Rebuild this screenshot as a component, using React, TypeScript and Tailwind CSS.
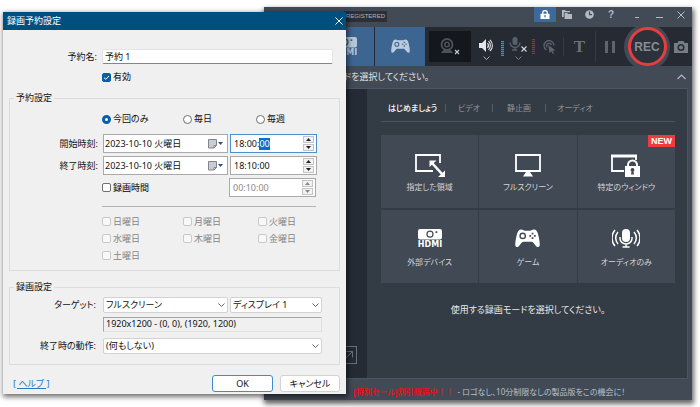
import { useEffect, useRef, useState } from "react";
import type { ReactNode } from "react";

const days = [
  ["日曜日", "月曜日", "火曜日"],
  ["水曜日", "木曜日", "金曜日"],
  ["土曜日"],
];

function HdmiIcon() {
  return (
    <svg width="26" height="19" viewBox="0 0 26 19" fill="currentColor" aria-hidden="true">
      <path
        fillRule="evenodd"
        d="M3 0h20a2 2 0 0 1 2 2v6.500a2 2 0 0 1-2 2H3a2 2 0 0 1-2-2V2a2 2 0 0 1 2-2Zm10 1.600a3.600 3.600 0 1 0 0 7.200 3.600 3.600 0 0 0 0-7.200Zm0 1.200a2.400 2.400 0 1 1 0 4.800 2.400 2.400 0 0 1 0-4.800Zm5.500-.6v1.800h1.800V2.200Z"
      />
      <circle cx="13" cy="5.200" r="1" />
      <text x="13" y="18" fontSize="8" fontWeight="700" textAnchor="middle" fontFamily="DejaVu Sans, sans-serif">
        HDMI
      </text>
    </svg>
  );
}

function GamepadIcon({ size }: { size: number }) {
  return (
    <svg width={size} height={size * 0.75} viewBox="0 0 24 18" fill="currentColor" aria-hidden="true">
      <path
        fillRule="evenodd"
        d="M6 0.500C7.600 0.500 8.200 1.600 9.500 1.600H14.500C15.800 1.600 16.400 0.500 18 0.500C20.500 0.500 21.600 2.400 22.400 6C23.200 9.600 24 13.500 23.700 15.700C23.400 17.600 21.600 17.900 20.300 16.500C18.700 14.800 17.600 12.200 15.900 12.200H8.100C6.400 12.200 5.300 14.800 3.700 16.500C2.400 17.900 0.600 17.600 0.300 15.700C0 13.500 0.800 9.600 1.600 6C2.400 2.400 3.500 0.500 6 0.500ZM7.400 3.400a3.200 3.200 0 1 0 0 6.400 3.200 3.200 0 0 0 0-6.400Zm0 1.300a1.900 1.900 0 1 1 0 3.800 1.900 1.900 0 0 1 0-3.800ZM16 3.500v1.700h1.700V3.500ZM16 8v1.700h1.700V8ZM13.800 5.700v1.700h1.700V5.700ZM18.200 5.700v1.700h1.700V5.700Z"
      />
    </svg>
  );
}

function RegionIcon() {
  return (
    <svg width="30" height="23" viewBox="0 0 30 23" fill="none" stroke="currentColor" aria-hidden="true">
      <path d="M25 9V1H1v16h17" strokeWidth="1.800" />
      <path d="M17 9l10 11" stroke="#414955" strokeWidth="5" />
      <path d="M17 9l10 11" strokeWidth="2.600" />
      <path d="M14.500 6.500h7l-7 6.500ZM30 23h-7l7-6.500Z" fill="currentColor" stroke="none" />
    </svg>
  );
}

function ScreenIcon() {
  return (
    <svg width="26" height="23" viewBox="0 0 26 23" fill="none" stroke="currentColor" aria-hidden="true">
      <path d="M1 1h24v16H1Z" strokeWidth="1.800" />
      <path d="M11 18h4l3 4.500H8Z" fill="currentColor" stroke="none" />
    </svg>
  );
}

function WindowLockIcon() {
  return (
    <svg width="30" height="23" viewBox="0 0 30 23" fill="none" stroke="currentColor" aria-hidden="true">
      <path d="M13 17H1V2h24v4" strokeWidth="1.800" />
      <path d="M0 2h26" strokeWidth="3" />
      <path d="M17 13v-2a4.500 4.500 0 0 1 9 0v2" strokeWidth="2" />
      <path
        fillRule="evenodd"
        d="M14 12h15v11H14Zm7.500 2a1.900 1.900 0 0 0-1 3.500L20 20.500h3l-.5-3a1.900 1.900 0 0 0-1-3.500Z"
        fill="currentColor"
        stroke="none"
      />
    </svg>
  );
}

function AudioIcon() {
  return (
    <svg width="28" height="19" viewBox="0 0 28 19" fill="none" stroke="currentColor" strokeWidth="1.500" aria-hidden="true">
      <rect x="10" y="0" width="8" height="13" rx="4" fill="currentColor" stroke="none" />
      <path d="M8 8v1.500a6 5.500 0 0 0 12 0V8M14 15v3M10.500 18h7" />
      <path d="M6 3a9 9 0 0 0 0 12M3 1a12 12 0 0 0 0 16M22 3a9 9 0 0 1 0 12M25 1a12 12 0 0 1 0 16" />
    </svg>
  );
}

function Meter({ className }: { className: string }) {
  return (
    <svg width="3" height="15" viewBox="0 0 3 15" className={className} aria-hidden="true">
      <path d="M1.500 0v15" stroke="currentColor" strokeWidth="3" strokeDasharray="1.200 0.800" />
    </svg>
  );
}

function Chevron({ className }: { className: string }) {
  return (
    <svg width="7" height="4" viewBox="0 0 7 4" fill="none" stroke="currentColor" className={className} aria-hidden="true">
      <path d="M.5.5l3 3 3-3" />
    </svg>
  );
}

const modes: { label: string; icon: ReactNode; isNew?: boolean }[] = [
  { label: "指定した領域", icon: <RegionIcon /> },
  { label: "フルスクリーン", icon: <ScreenIcon /> },
  { label: "特定のウィンドウ", icon: <WindowLockIcon />, isNew: true },
  { label: "外部デバイス", icon: <HdmiIcon /> },
  { label: "ゲーム", icon: <GamepadIcon size={25} /> },
  { label: "オーディオのみ", icon: <AudioIcon /> },
];

function TitleButton({ label, active, children }: { label: string; active?: boolean; children: ReactNode }) {
  return (
    <button
      type="button"
      aria-label={label}
      className={`flex h-[15px] w-[22px] items-center justify-center ${active ? "bg-[#3d6a9a] text-white" : "text-[#b5b9c0]"}`}
    >
      {children}
    </button>
  );
}

function Recorder() {
  return (
    <section
      aria-label="レコーダー"
      className="absolute top-[7px] right-2 left-[264px] flex flex-col bg-[#424a56] shadow-[1px_3px_5px_1px_rgba(0,0,0,0.6)]"
    >
      <header className="flex h-5 items-start">
        <span className="mt-1 ml-20 bg-[#2a2f38] px-0.5 font-['Liberation_Sans',sans-serif] text-[6px] leading-[11px] text-[#b0b5bc]">
          REGISTERED
        </span>
        <div className="ml-auto flex">
          <TitleButton label="ロック" active>
            <svg width="10" height="9" viewBox="0 0 10 9" fill="none" aria-hidden="true">
              <path d="M2.700 4V2.800a2.300 2.300 0 0 1 4.600 0V4" stroke="currentColor" strokeWidth="1.300" />
              <path fillRule="evenodd" d="M.5 3.700h9V9h-9ZM4.400 5v2.600h1.200V5Z" fill="currentColor" />
            </svg>
          </TitleButton>
          <TitleButton label="フォルダー">
            <svg width="10" height="9" viewBox="0 0 10 9" fill="currentColor" aria-hidden="true">
              <path d="M0 0h3l1 1h4v1.200H1.800V7H0ZM2.600 3h2.600l1 1H10v5H2.600Z" />
            </svg>
          </TitleButton>
          <TitleButton label="履歴">
            <svg width="9" height="9" viewBox="0 0 9 9" aria-hidden="true">
              <circle cx="4.500" cy="4.500" r="4.300" fill="currentColor" />
              <path d="M4.500 1.500v3.200H7" fill="none" stroke="#424a56" strokeWidth="1.200" />
            </svg>
          </TitleButton>
          <TitleButton label="ヘルプ">
            <span className="font-['Liberation_Sans',sans-serif] text-[10px] leading-none font-bold">?</span>
          </TitleButton>
          <span className="w-1" />
          <TitleButton label="トレイへ">
            <span className="mt-1.5 h-px w-1 bg-current" />
          </TitleButton>
          <TitleButton label="最小化">
            <span className="mt-1.5 h-px w-[7px] bg-current" />
          </TitleButton>
          <TitleButton label="閉じる">
            <svg width="8" height="8" viewBox="0 0 8 8" stroke="currentColor" aria-hidden="true">
              <path d="M.5.5l7 7M7.500.5l-7 7" />
            </svg>
          </TitleButton>
        </div>
      </header>

      <div className="flex h-[39px] bg-[#252a33]">
        <button type="button" aria-label="外部デバイス" className="flex w-[110px] items-center justify-end bg-[#3d6591] pr-4 text-[#b6c7da]">
          <HdmiIcon />
        </button>
        <button type="button" aria-label="ゲーム" className="ml-px flex w-[50px] items-center justify-center bg-[#3d6591] text-[#bccbdc]">
          <GamepadIcon size={19} />
        </button>
        <button type="button" aria-label="ウェブカメラ" className="my-1 ml-1 flex w-[42px] items-center justify-center bg-[#14171b] text-[#4d525a]">
          <svg width="20" height="17" viewBox="0 0 20 17" fill="none" stroke="currentColor" aria-hidden="true">
            <circle cx="7" cy="6.500" r="5.500" strokeWidth="1.800" />
            <circle cx="7" cy="6.500" r="2.200" strokeWidth="1.600" />
            <path d="M1.500 14.500l2-2h7l2 2Z" fill="currentColor" />
            <path d="M15 12l4 4M19 12l-4 4" stroke="#c9ccd0" strokeWidth="1.100" />
          </svg>
        </button>
        <button type="button" aria-label="スピーカー" className="flex w-[30px] flex-col items-center justify-end gap-1 pb-1.5 text-[#a9aeb5]">
          <svg width="14" height="13" viewBox="0 0 14 13" fill="none" stroke="currentColor" aria-hidden="true">
            <path d="M0 4h3l4-4v13L3 9H0Z" fill="#e3e6ea" stroke="none" />
            <path d="M8.500 4a4 4 0 0 1 0 5M9.500 2.200a6 6 0 0 1 0 8.600M11 .8a8 8 0 0 1 0 11.400" stroke="#e3e6ea" strokeWidth="1.100" />
          </svg>
          <Chevron className="" />
        </button>
        <Meter className="mt-3.5 text-[#3f8fce]" />
        <button type="button" aria-label="マイク" className="flex w-[28px] flex-col items-center justify-end gap-1 pb-1.5 text-[#7a8088]">
          <svg width="18" height="15" viewBox="0 0 18 15" fill="none" stroke="currentColor" aria-hidden="true">
            <rect x="3.500" y="0" width="5" height="8" rx="2.500" fill="#5a6069" stroke="none" />
            <path d="M1 5.500a5 5 0 0 0 10 0M6 10.500V13M3 13h5" stroke="#5a6069" strokeWidth="1.400" />
            <path d="M12.500 9.500l5 5M17.500 9.500l-5 5" stroke="#d5d8dc" strokeWidth="1.100" />
          </svg>
          <Chevron className="" />
        </button>
        <Meter className="mt-3 text-[#6b4a2a]" />
        <button type="button" aria-label="マウス効果" className="flex w-[28px] items-center justify-center text-[#5f656e]">
          <svg width="13" height="14" viewBox="0 0 13 14" fill="none" stroke="currentColor" strokeWidth="1.300" aria-hidden="true">
            <path d="M3.500 10A5 5 0 1 1 11 5.500M4.300 7.500A2.500 2.500 0 1 1 8.500 5" />
            <path d="M5.500 5l7 5.500-3 .3 1.500 2.700-1.200.5-1.400-2.800-2 1.800Z" fill="currentColor" stroke="none" />
          </svg>
        </button>
        <span className="my-2.5 w-px bg-[#343a44]" />
        <button type="button" aria-label="テキスト" className="w-[31px] font-['Liberation_Serif',serif] text-[17px] font-bold text-[#6a7079]">
          T
        </button>
        <span className="my-1 w-px bg-[#343a44]" />
        <button type="button" aria-label="一時停止" className="flex w-[28px] items-center justify-center gap-1 text-[#5f656e]">
          <span className="h-3 w-[3px] bg-current" />
          <span className="h-3 w-[3px] bg-current" />
        </button>
        <div className="flex w-[46px] items-center justify-center overflow-hidden">
          <div className="flex size-[46px] shrink-0 items-center justify-center rounded-full bg-[#424a56]">
            <button
              type="button"
              className="size-[39px] rounded-full border-[3px] border-[#e63e3e] bg-[#2c323b] font-['Liberation_Sans',sans-serif] text-[12px] font-bold text-[#888d95]"
            >
              REC
            </button>
          </div>
        </div>
        <button type="button" aria-label="スクリーンショット" className="flex flex-1 items-center justify-center text-[#777d85]">
          <svg width="14" height="12" viewBox="0 0 14 12" fill="currentColor" aria-hidden="true">
            <path fillRule="evenodd" d="M0 2h3.500L4.500 0h5l1 2H14v10H0ZM7 3a3.500 3.500 0 1 0 0 7 3.500 3.500 0 0 0 0-7Zm0 1.500a2 2 0 1 1 0 4 2 2 0 0 1 0-4Z" />
          </svg>
        </button>
      </div>

      <div className="flex h-[22px] items-center justify-between pr-1.5 pl-20">
        <p className="text-[9px] text-[#dfe2e6]">ドを選択してください。</p>
        <svg width="9" height="6" viewBox="0 0 9 6" fill="none" stroke="#b4b8be" strokeWidth="1.200" aria-hidden="true">
          <path d="M.5 5l4-4 4 4" />
        </svg>
      </div>

      <div className="mr-1 flex h-[291px] border-y border-r border-[#4c5561] bg-[#333b45]">
        <aside className="flex w-[103px] items-end justify-end bg-[#252b34] pr-2.5 pb-3.5">
          <button type="button" aria-label="開く" className="flex size-[18px] items-center justify-center border border-[#68707a] text-[#68707a]">
            <svg width="9" height="9" viewBox="0 0 9 9" fill="none" stroke="currentColor" aria-hidden="true">
              <path d="M.5 8.500l8-8M2.500.5h6v6" />
            </svg>
          </button>
        </aside>
        <div className="flex-1 pr-3 pl-3.5">
          <nav className="flex h-[33px] items-center border-b border-[#4c5561] pt-1.5 pl-[7px] text-[8px] text-[#8f959d]">
            <button type="button" className="w-[57px] text-left font-medium text-white">はじめましょう</button>
            <span className="h-2 w-px bg-[#555d68]" />
            <button type="button" className="w-[46px] text-center">ビデオ</button>
            <span className="h-2 w-px bg-[#555d68]" />
            <button type="button" className="w-[52px] text-center">静止画</button>
            <span className="h-2 w-px bg-[#555d68]" />
            <button type="button" className="w-[58px] text-center">オーディオ</button>
          </nav>
          <div className="mt-[13px] grid grid-cols-3 gap-x-px gap-y-0.5">
            {modes.map((mode) => (
              <button
                key={mode.label}
                type="button"
                className="relative flex h-[73px] flex-col items-center bg-[#414955] pt-[19px] text-white"
              >
                <span className="flex h-[23px] items-start">{mode.icon}</span>
                <span className="mt-1 text-[8px] leading-3 text-[#d2d5da]">{mode.label}</span>
                {mode.isNew && (
                  <span className="absolute top-0 right-0 bg-[#ee3b3f] px-[3px] font-['Liberation_Sans',sans-serif] text-[9px] leading-3 font-bold">
                    NEW
                  </span>
                )}
              </button>
            ))}
          </div>
          <p className="mt-[19px] text-center text-[9px] leading-4 text-[#e6e8eb]">使用する録画モードを選択してください。</p>
        </div>
      </div>

      <footer className="flex h-[21px] items-center gap-1 pt-1 pl-[89px] text-[8px] whitespace-nowrap">
        <strong className="text-[#e0121b]">
          [特別セール]割引販売中<span className="[font-feature-settings:normal]">！！</span>
        </strong>
        <span className="text-[#bcc0c6]">- ロゴなし、10分制限なしの製品版をこの機会に！</span>
      </footer>
    </section>
  );
}

function Check({ label, defaultChecked, disabled }: { label: string; defaultChecked?: boolean; disabled?: boolean }) {
  return (
    <label className={`flex items-center gap-0.5 ${disabled ? "text-[#858585]" : "text-black"}`}>
      <span className="grid">
        <input
          type="checkbox"
          defaultChecked={defaultChecked}
          disabled={disabled}
          className="peer col-start-1 row-start-1 size-[9px] appearance-none rounded-[2px] border border-[#6f6f6f] bg-white checked:border-[#0b5cad] checked:bg-[#0b5cad] disabled:border-[#c9c9c9] disabled:bg-[#f8f8f8]"
        />
        <svg
          viewBox="0 0 9 9"
          fill="none"
          stroke="white"
          className="pointer-events-none invisible col-start-1 row-start-1 size-[9px] peer-checked:visible"
          aria-hidden="true"
        >
          <path d="M2 4.700l1.800 1.600L7 3" />
        </svg>
      </span>
      {label}
    </label>
  );
}

function Radio({ label, defaultChecked }: { label: string; defaultChecked?: boolean }) {
  return (
    <label className="flex items-center gap-0.5">
      <input
        type="radio"
        name="repeat"
        defaultChecked={defaultChecked}
        className="size-[9px] appearance-none rounded-full border border-[#6f6f6f] bg-white checked:border-[3px] checked:border-[#0b5cad]"
      />
      {label}
    </label>
  );
}

function DateField({ id }: { id: string }) {
  return (
    <div className="flex h-[19px] w-[125px] items-center border border-[#a9a9a9] bg-white pr-1">
      <input id={id} defaultValue="2023-10-10 火曜日" className="min-w-0 flex-1 pl-px outline-none" />
      <button type="button" aria-label="カレンダー" className="flex items-center gap-px">
        <svg width="9" height="10" viewBox="0 0 9 10" aria-hidden="true">
          <path d="M.5.5h8v6l-2.500 2.500H.5Z" fill="#c9ccd3" stroke="#82858c" />
          <path d="M8.500 6.500H6V9Z" fill="#fff" stroke="#82858c" />
        </svg>
        <svg width="5" height="3" viewBox="0 0 5 3" aria-hidden="true">
          <path d="M0 0h5L2.500 3Z" fill="#2f4f86" />
        </svg>
      </button>
    </div>
  );
}

function SpinButton({ label, up, disabled }: { label: string; up?: boolean; disabled?: boolean }) {
  return (
    <button
      type="button"
      aria-label={label}
      disabled={disabled}
      className="flex h-[7px] w-[11px] items-center justify-center border border-[#c4c4c4] bg-[#f2f2f2] text-[#222] disabled:text-[#888]"
    >
      <svg width="5" height="3" viewBox="0 0 5 3" fill="currentColor" aria-hidden="true">
        <path d={up ? "M0 3h5L2.500 0Z" : "M0 0h5L2.500 3Z"} />
      </svg>
    </button>
  );
}

function TimeField({ label, value, active, disabled }: { label: string; value: string; active?: boolean; disabled?: boolean }) {
  const ref = useRef<HTMLInputElement>(null);
  useEffect(() => {
    if (active && ref.current) {
      ref.current.focus();
      ref.current.setSelectionRange(6, 8);
    }
  }, [active]);
  return (
    <div className={`flex h-[19px] w-[87px] items-center border bg-white pr-0.5 ${active ? "border-[#4a90d0]" : "border-[#a9a9a9]"}`}>
      <input
        ref={ref}
        aria-label={label}
        defaultValue={value}
        disabled={disabled}
        className="min-w-0 flex-1 pl-[3px] outline-none selection:bg-[#0a6fcb] selection:text-white disabled:text-[#8a8a8a]"
      />
      <div className="flex flex-col gap-px">
        <SpinButton label={`${label} 増やす`} up disabled={disabled} />
        <SpinButton label={`${label} 減らす`} disabled={disabled} />
      </div>
    </div>
  );
}

function Dropdown({ id, label, value, className }: { id: string; label?: string; value: string; className: string }) {
  return (
    <div className={`relative ${className}`}>
      <select
        id={id}
        aria-label={label}
        className="block h-4 w-full appearance-none rounded-[2px] border border-[#d2d2d2] bg-white pl-0.5 leading-[14px]"
      >
        <option>{value}</option>
      </select>
      <Chevron className="pointer-events-none absolute top-1.5 right-[3px] text-[#666]" />
    </div>
  );
}

const formRow = "grid grid-cols-[88px_1fr] items-center gap-x-[5px]";

function ScheduleDialog() {
  const [open, setOpen] = useState(true);
  if (!open) return null;
  return (
    <form
      aria-label="録画予約設定"
      onSubmit={(event) => event.preventDefault()}
      className="absolute top-3 left-[3px] w-[343px] bg-[#f0f0f0] text-[9px] leading-3 text-[#111] shadow-[1px_2px_5px_1px_rgba(0,0,0,0.55)]"
    >
      <header className="flex h-[18px] items-center justify-between bg-[#00507f] pr-[3px] pl-1 text-white">
        <h1>録画予約設定</h1>
        <button type="button" aria-label="閉じる" onClick={() => setOpen(false)}>
          <svg width="8" height="8" viewBox="0 0 8 8" stroke="currentColor" aria-hidden="true">
            <path d="M.5.5l7 7M7.500.5l-7 7" />
          </svg>
        </button>
      </header>

      <div className="px-1.5 pt-[19px] pb-0.5">
        <div className={formRow}>
          <label htmlFor="name" className="text-right">予約名:</label>
          <input
            id="name"
            defaultValue="予約 1"
            className="h-[15px] w-[231px] rounded-[2px] border border-[#e4e4e4] border-b-[#858585] bg-white pl-0.5 outline-none"
          />
        </div>
        <div className="mt-[7px] pl-[93px]">
          <Check label="有効" defaultChecked />
        </div>

        <fieldset className="mt-[9px] border border-[#dcdcdc] pb-1.5">
          <legend className="ml-1 px-0.5">予約設定</legend>
          <div className="mt-[9px] grid grid-cols-[81px_73px_auto] pl-[92px]">
            <Radio label="今回のみ" defaultChecked />
            <Radio label="毎日" />
            <Radio label="毎週" />
          </div>
          <div className="mt-[9px] flex flex-col gap-[3px]">
            <div className={formRow}>
              <label htmlFor="start" className="text-right">開始時刻:</label>
              <div className="flex gap-0.5">
                <DateField id="start" />
                <TimeField label="開始時刻の時間" value="18:00:00" active />
              </div>
            </div>
            <div className={formRow}>
              <label htmlFor="end" className="text-right">終了時刻:</label>
              <div className="flex gap-0.5">
                <DateField id="end" />
                <TimeField label="終了時刻の時間" value="18:10:00" />
              </div>
            </div>
            <div className="flex items-center pl-[92px]">
              <div className="w-[127px]">
                <Check label="録画時間" />
              </div>
              <TimeField label="録画時間の長さ" value="00:10:00" disabled />
            </div>
          </div>
          <div className="mt-[9px] ml-[92px] w-[214px] border-t border-[#b5b5b5] pt-1.5">
            {days.map((row) => (
              <div key={row[0]} className="grid h-[17px] grid-cols-[81px_75px_auto] items-center">
                {row.map((day) => (
                  <Check key={day} label={day} disabled />
                ))}
              </div>
            ))}
          </div>
        </fieldset>

        <fieldset className="mt-2.5 border border-[#dcdcdc] pb-2.5">
          <legend className="ml-1 px-0.5">録画設定</legend>
          <div className={`mt-1 ${formRow}`}>
            <label htmlFor="target" className="pr-0.5 text-right">ターゲット:</label>
            <div className="flex gap-0.5">
              <Dropdown id="target" value="フルスクリーン" className="w-[125px]" />
              <Dropdown id="display" label="ディスプレイ" value="ディスプレイ 1" className="w-[92px]" />
            </div>
          </div>
          <output className="mt-1 ml-[93px] block h-[15px] w-[219px] border border-[#e0e0e0] border-t-[#a5a5a5] border-l-[#a5a5a5] pl-0.5">
            1920x1200 - (0, 0), (1920, 1200)
          </output>
          <div className={`mt-1.5 ${formRow}`}>
            <label htmlFor="after" className="pr-0.5 text-right">終了時の動作:</label>
            <Dropdown id="after" value="(何もしない)" className="w-[219px]" />
          </div>
        </fieldset>

        <div className="mt-2.5 flex h-[17px] items-center gap-[7px] pl-1">
          <a href="#help" className="mr-auto text-[#2a78c4] underline">[ ヘルプ ]</a>
          <button type="submit" className="h-[17px] w-[61px] rounded-[3px] border border-[#3d8bd0] bg-white">OK</button>
          <button type="button" onClick={() => setOpen(false)} className="h-[17px] w-[60px] rounded-[3px] border border-[#d2d2d2] bg-white">
            キャンセル
          </button>
        </div>
      </div>
    </form>
  );
}

export default function App() {
  return (
    <main className="relative min-h-screen overflow-hidden bg-white font-['Noto_Sans','Noto_Sans_CJK_JP',sans-serif] [font-feature-settings:'palt']">
      <Recorder />
      <ScheduleDialog />
    </main>
  );
}
